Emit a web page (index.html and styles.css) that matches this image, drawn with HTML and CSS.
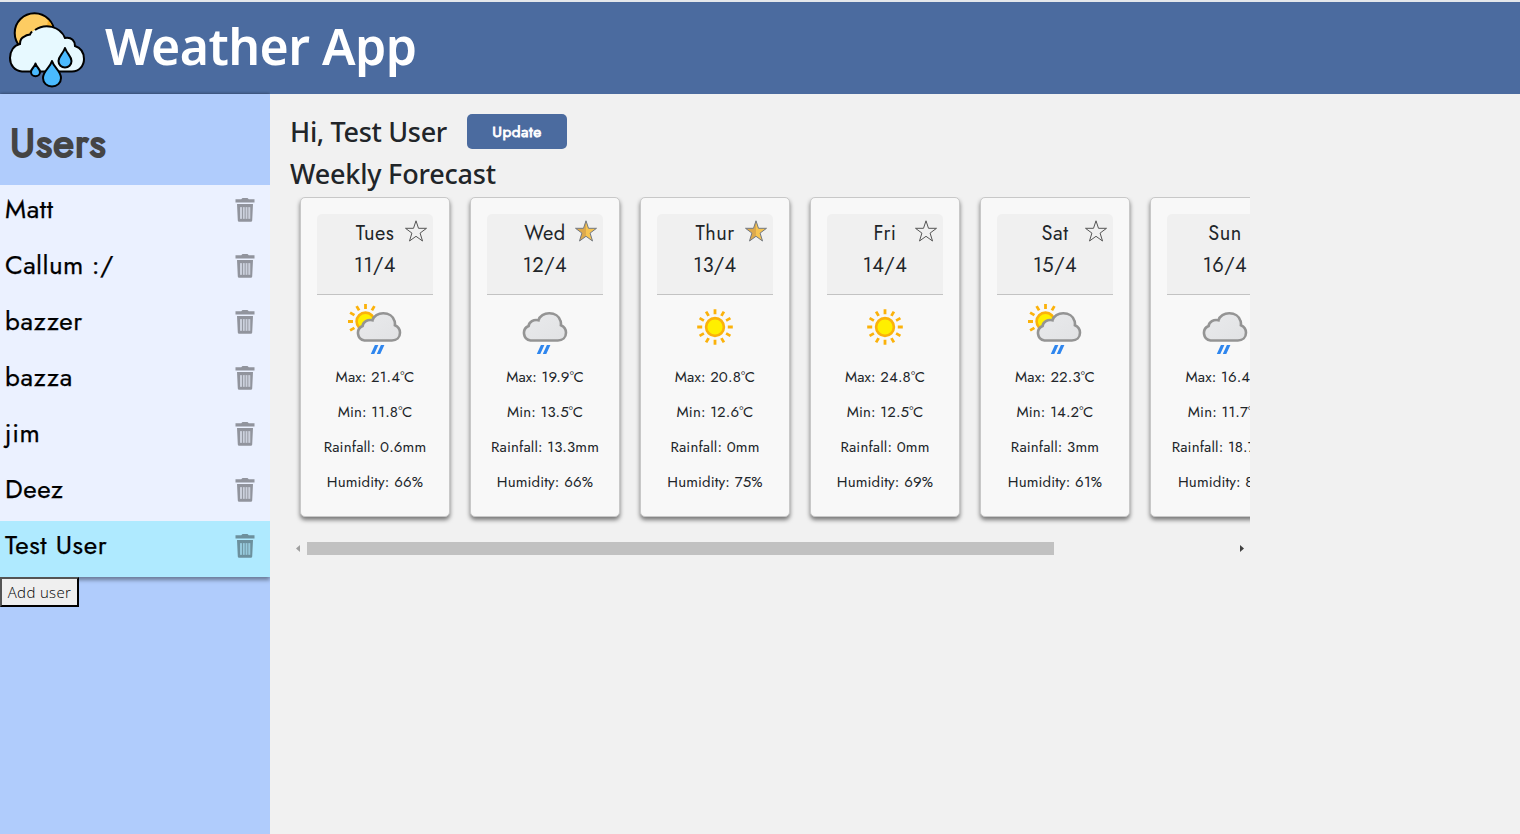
FILE: index.html
```
<!DOCTYPE html>
<html lang="en">
<head>
<meta charset="utf-8">
<title>Weather App</title>
<link rel="stylesheet" href="styles.css">
</head>
<body>
<svg class="sprite" aria-hidden="true">
  <linearGradient id="cloudfill" x1="0" y1="0" x2="1" y2="1"><stop offset="0" stop-color="#e9eaec"/><stop offset="1" stop-color="#e1e2e4"/></linearGradient>
  <symbol id="trash" viewBox="0 0 20 24"><path fill-rule="evenodd" d="M.5 1.300h5.700L7.500 0h5l1.300 1.300h5.700v3.200H.5zM2 6h16l-.8 16.600q-.1 1.200-1.300 1.200H4.100q-1.200 0-1.300-1.200zM5 9.300v11.500h2V9.300zM7.900 9.300v11.500h1.800V9.300zM10.600 9.300v11.500h1.800V9.300zM13.300 9.300v11.500h1.900V9.300z"/><path opacity=".35" d="M5 9.300h10.200v11.500H5z"/></symbol>
  <symbol id="star" viewBox="0 0 24 24"><path fill="none" stroke="#555" stroke-width="1" stroke-linejoin="miter" d="M12 1.800l2.500 7.500h8l-6.400 4.800 2.400 7.900-6.500-4.700L5.500 22l2.400-7.900-6.400-4.800h8z"/></symbol>
  <symbol id="star-on" viewBox="0 0 24 24"><path fill="#f6c451" d="M12 1.800l2.500 7.500h8l-6.400 4.800 2.400 7.900-6.500-4.700z"/><path fill="#dca94c" d="M12 1.800v15.500L5.500 22l2.400-7.900-6.400-4.800h8z"/><path fill="none" stroke="#737982" d="M12 1.800l2.500 7.500h8l-6.400 4.800 2.400 7.900-6.500-4.700L5.500 22l2.400-7.900-6.400-4.800h8z"/></symbol>
  <symbol id="cloud" viewBox="0 0 46 52"><g transform="translate(0 4)"><path fill="url(#cloudfill)" stroke="#949494" stroke-width="2.600" d="M8.500 33.500a7.600 7.600 0 0 1-1.900-14.500C7 14.900 11.700 12 16.500 13.300 18.500 4 36 3.600 38.600 14.200q.5 1.800.3 4c3.300 1.400 5.100 4.300 5.100 7.600 0 4.600-3.400 7.700-8.100 7.700z"/><path fill="#2f86ee" d="M18.900 38h3.500L18.300 47h-3.500zM24.900 38h3.500L24.300 47h-3.500z"/></g></symbol>
  <symbol id="sun" viewBox="0 0 36 36"><circle cx="18" cy="18" r="8.900" fill="#ffef00" stroke="#fbb20b" stroke-width="2.600"/><g stroke="#fbb20b" stroke-width="2.800"><path d="M18 .2v5M18 30.800v5M.2 18h5M30.800 18h5M9.100 2.600l2.500 4.300M24.400 29.100l2.500 4.300M2.600 9.100l4.300 2.500M29.100 24.400l4.300 2.500M2.600 26.900l4.300-2.500M29.100 11.600l4.300-2.500M9.100 33.400l2.500-4.300M24.400 6.900l2.500-4.300"/></g></symbol>
  <symbol id="partly" viewBox="0 0 56 52"><circle cx="18.500" cy="18.500" r="8.900" fill="#ffef00" stroke="#fbb20b" stroke-width="2.600"/><path fill="none" stroke="#fbb20b" stroke-width="2.800" d="M18.500 1v5M1 18.500h5M9.600 3.100l2.500 4.300M24.900 7.400l2.500-4.300M3.100 9.600l4.300 2.500M3.100 27.400l4.300-2.500"/><use href="#cloud" x="9" y="0" width="46" height="52"/></symbol>
</svg>
<header class="topbar">
  <svg class="logo" viewBox="0 0 76 76">
    <circle cx="25.500" cy="21" r="19.800" fill="#fdcc62" stroke="#000" stroke-width="2"/>
    <path d="M39 8q5 5 5 11l-6-5z" fill="#f7b12c"/>
    <path d="M26 18C36 11 51 14 56 26c7-1 10 3 10 8 6 2 9 7 9 13 0 7-5 12.500-12 12.500H13C5.500 59 1 53 1 46c0-7 4-13 10-14q0-6 4.500-7.500Q17 23 21 22.500 22 20 26 18z" fill="#e7f9ff"/>
    <path d="M26 18C36 11 51 14 56 26c7-1 10 3 10 8 6 2 9 7 9 13 0 7-5 12.500-12 12.500H13C5.500 59 1 53 1 46c0-7 4-13 10-14q0-6 4.500-7.500Q17 23 21 22.500q.5-1.500 2-3" fill="none" stroke="#000" stroke-width="2"/>
    <g fill="#4abaff" stroke="#000" stroke-width="2" stroke-linejoin="round">
      <path d="M56 36c-2 6-6.500 8-6.500 13 0 4 3 6.500 6.500 6.500s6.500-2.500 6.500-6.500c0-5-4.500-7-6.500-13z"/>
      <path d="M26.500 51.500c-1 4-4.500 5-4.500 8.500 0 2.500 2 4.300 4.500 4.300S31 62.500 31 60c0-3.500-3.500-4.500-4.500-8.500z"/>
      <path d="M43 49c-2 7-9 10-9 17 0 5 4 8.500 9 8.500s9-3.500 9-8.500c0-7-7-10-9-17z"/>
    </g>
  </svg>
  <h1 class="title">Weather App</h1>
</header>
<div class="layout">
  <aside class="sidebar">
    <h2 class="users-title">Users</h2>
    <ul class="users">
      <li class="user"><span>Matt</span><svg class="bin"><use href="#trash"/></svg></li>
      <li class="user"><span class="tight">Callum :/</span><svg class="bin"><use href="#trash"/></svg></li>
      <li class="user"><span>bazzer</span><svg class="bin"><use href="#trash"/></svg></li>
      <li class="user"><span>bazza</span><svg class="bin"><use href="#trash"/></svg></li>
      <li class="user"><span>jim</span><svg class="bin"><use href="#trash"/></svg></li>
      <li class="user"><span>Deez</span><svg class="bin"><use href="#trash"/></svg></li>
      <li class="user selected"><span>Test User</span><svg class="bin"><use href="#trash"/></svg></li>
    </ul>
    <button class="add">Add user</button>
  </aside>
  <main class="content">
    <div class="greeting"><h3 class="heading hi">Hi, Test User</h3><button class="update">Update</button></div>
    <h3 class="heading weekly">Weekly Forecast</h3>
    <div class="cards">
      <article class="card"><div class="day"><span>Tues</span><span>11/4</span><svg class="fav"><use href="#star"/></svg></div><svg class="icon partly"><use href="#partly"/></svg><p>Max: 21.4<i>°</i>C</p><p>Min: 11.8<i>°</i>C</p><p>Rainfall: 0.6mm</p><p>Humidity: 66%</p></article>
      <article class="card"><div class="day"><span>Wed</span><span>12/4</span><svg class="fav"><use href="#star-on"/></svg></div><svg class="icon cloud"><use href="#cloud"/></svg><p>Max: 19.9<i>°</i>C</p><p>Min: 13.5<i>°</i>C</p><p>Rainfall: 13.3mm</p><p>Humidity: 66%</p></article>
      <article class="card"><div class="day"><span>Thur</span><span>13/4</span><svg class="fav"><use href="#star-on"/></svg></div><svg class="icon sun"><use href="#sun"/></svg><p>Max: 20.8<i>°</i>C</p><p>Min: 12.6<i>°</i>C</p><p>Rainfall: 0mm</p><p>Humidity: 75%</p></article>
      <article class="card"><div class="day"><span>Fri</span><span>14/4</span><svg class="fav"><use href="#star"/></svg></div><svg class="icon sun"><use href="#sun"/></svg><p>Max: 24.8<i>°</i>C</p><p>Min: 12.5<i>°</i>C</p><p>Rainfall: 0mm</p><p>Humidity: 69%</p></article>
      <article class="card"><div class="day"><span>Sat</span><span>15/4</span><svg class="fav"><use href="#star"/></svg></div><svg class="icon partly"><use href="#partly"/></svg><p>Max: 22.3<i>°</i>C</p><p>Min: 14.2<i>°</i>C</p><p>Rainfall: 3mm</p><p>Humidity: 61%</p></article>
      <article class="card"><div class="day"><span>Sun</span><span>16/4</span></div><svg class="icon cloud"><use href="#cloud"/></svg><p>Max: 16.4<i>°</i>C</p><p>Min: 11.7<i>°</i>C</p><p>Rainfall: 18.7mm</p><p>Humidity: 81%</p></article>
    </div>
    <div class="scrollbar"><svg class="arrow" viewBox="0 0 4 7"><path fill="#a0a0a0" d="M4 0v7L0 3.500z"/></svg><div class="track"><div class="thumb"></div></div><svg class="arrow" viewBox="0 0 4 7"><path fill="#404040" d="M0 0v7l4-3.500z"/></svg></div>
  </main>
</div>
</body>
</html>
```
FILE: styles.css
```
* { box-sizing: border-box; }
body { margin: 0; height: 834px; overflow: hidden; display: flex; flex-direction: column; background: #f1f1f1; color: #212529; font-family: Jost, Lato, sans-serif; }
h1, h2, h3, p, ul { margin: 0; padding: 0; }
.sprite { position: absolute; width: 0; height: 0; }
.topbar { height: 94px; flex: none; border-top: 2px solid #e4e7eb; background: #4b6b9f; display: flex; padding: 10px 9px; gap: 20px; }
.logo { width: 76px; height: 76px; overflow: visible; }
.title { font: 600 50px/68px "Segoe UI", "Noto Sans", sans-serif; color: #fff; letter-spacing: -.55px; white-space: nowrap; }
.layout { flex: 1; display: flex; min-height: 0; }
.sidebar { width: 270px; background: #b0ccfc; box-shadow: 0 0 3px rgba(0,0,0,.5); clip-path: inset(-3px 0 0 0); }
.users-title { height: 91px; padding: 20px 10px; font-size: 40px; line-height: 59px; color: #444; font-weight: 400; letter-spacing: 1px; -webkit-text-stroke: 2px #444; }
.users { list-style: none; background: #ebf1ff; box-shadow: 0 3px 4px rgba(0,0,0,.4); clip-path: inset(0 0 -10px 0); }
.user { height: 56px; display: flex; justify-content: space-between; align-items: flex-start; padding: 13px 15px 0 5px; font-size: 26px; line-height: 22px; letter-spacing: .65px; color: #000; -webkit-text-stroke: .25px #000; }
.tight { letter-spacing: .4px; }
.selected { background: #afeaff; }
.bin { width: 20px; height: 24px; fill: #000; opacity: .38; stroke: none; }
.add { display: block; position: relative; width: 79px; height: 30px; padding: 0; border: 2px outset #000; background: #efefef; font: 300 15px "Segoe UI", "Open Sans", sans-serif; letter-spacing: .35px; color: #000; }
.content { width: 980px; padding: 20px 0 0 20px; }
.greeting { display: flex; gap: 20px; height: 35px; }
.heading { font: 500 27px/36px "Segoe UI", "Noto Sans", sans-serif; letter-spacing: -.2px; white-space: nowrap; }
.hi { width: 157px; letter-spacing: -.32px; }
.weekly { height: 48px; line-height: 50px; }
.update { width: 100px; height: 35px; border: 0; border-radius: 5px; background: #4b6b9f; color: #fff; font: 400 15.500px Jost, Lato, sans-serif; letter-spacing: .5px; -webkit-text-stroke: .8px #fff; padding: 0; }
.cards { display: flex; gap: 20px; padding: 0 0 15px 10px; height: 345px; overflow: hidden; }
.card { flex: none; width: 150px; height: 320px; padding: 16px 0 0; border: 1px solid #c8c8c8; border-radius: 5px; background: #f8f8f8; box-shadow: 0 3px 4px rgba(0,0,0,.5); display: flex; flex-direction: column; align-items: center; }
.day { position: relative; flex: none; width: 116px; height: 81px; background: #f0f0f0; border-bottom: 1px solid #c3c3c3; border-radius: 5px 5px 0 0; display: flex; flex-direction: column; align-items: center; padding-top: 4px; font-size: 20px; line-height: 32px; letter-spacing: .5px; }
.fav { position: absolute; right: 5px; top: 5px; width: 24px; height: 24px; }
.icon { flex: none; height: 52px; margin: 8px 0 12px; }
.partly { width: 56px; }
.cloud { width: 46px; }
.sun { width: 36px; height: 36px; margin: 14px 0 22px; }
.card p { font-size: 15px; line-height: 20px; height: 35px; flex: none; white-space: nowrap; letter-spacing: .15px; }
.card i { font-style: normal; letter-spacing: -.4px; }
.scrollbar { display: flex; align-items: center; height: 13px; gap: 7px; padding: 0 6px; }
.arrow { width: 4px; height: 7px; }
.track { flex: 1; height: 13px; }
.thumb { width: 747px; height: 13px; background: #c1c1c1; }
```
